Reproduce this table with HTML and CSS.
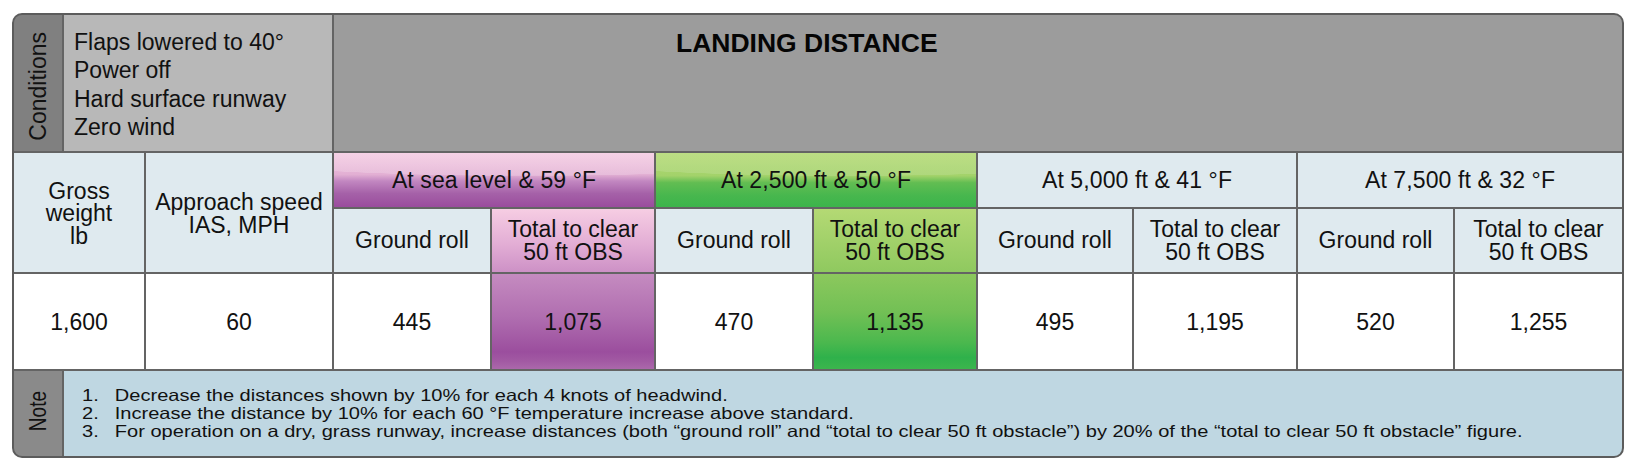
FILE: index.html
```html
<!DOCTYPE html>
<html lang="en">
<head>
<meta charset="utf-8">
<title>Landing Distance</title>
<link rel="stylesheet" href="styles.css">
</head>
<body>
<div class="chart">
  <div class="cond">
    <div class="side-label"><span class="side-text cond-label">Conditions</span></div>
    <div class="cond-text">Flaps lowered to 40°<br>Power off<br>Hard surface runway<br>Zero wind</div>
  </div>
  <div class="title"><h1>LANDING DISTANCE</h1></div>

  <div class="cell head span-rows">Gross<br>weight<br>lb</div>
  <div class="cell head span-rows">Approach speed<br>IAS, MPH</div>
  <div class="cell head group pink-group">At sea level &amp; 59 °F</div>
  <div class="cell head group green-group">At 2,500 ft &amp; 50 °F</div>
  <div class="cell head group">At 5,000 ft &amp; 41 °F</div>
  <div class="cell head group">At 7,500 ft &amp; 32 °F</div>

  <div class="cell head">Ground roll</div>
  <div class="cell head pink-sub">Total to clear<br>50 ft OBS</div>
  <div class="cell head">Ground roll</div>
  <div class="cell head green-sub">Total to clear<br>50 ft OBS</div>
  <div class="cell head">Ground roll</div>
  <div class="cell head">Total to clear<br>50 ft OBS</div>
  <div class="cell head">Ground roll</div>
  <div class="cell head">Total to clear<br>50 ft OBS</div>

  <div class="cell data">1,600</div>
  <div class="cell data">60</div>
  <div class="cell data">445</div>
  <div class="cell data pink-data">1,075</div>
  <div class="cell data">470</div>
  <div class="cell data green-data">1,135</div>
  <div class="cell data">495</div>
  <div class="cell data">1,195</div>
  <div class="cell data">520</div>
  <div class="cell data">1,255</div>

  <div class="note">
    <div class="side-label note-side"><span class="side-text note-label">Note</span></div>
    <div class="note-body">
      <ol class="notes">
        <li><span class="num">1.</span><span>Decrease the distances shown by 10% for each 4 knots of headwind.</span></li>
        <li><span class="num">2.</span><span>Increase the distance by 10% for each 60 °F temperature increase above standard.</span></li>
        <li><span class="num">3.</span><span>For operation on a dry, grass runway, increase distances (both “ground roll” and “total to clear 50 ft obstacle”) by 20% of the “total to clear 50 ft obstacle” figure.</span></li>
      </ol>
    </div>
  </div>
</div>
</body>
</html>
```

FILE: styles.css
```css
html, body {
  margin: 0;
  padding: 0;
  background: #ffffff;
}

body {
  font-family: "Liberation Sans", Arial, Helvetica, sans-serif;
  color: #111111;
  padding: 13px 0 0 12px;
}

.chart {
  display: grid;
  grid-template-columns: 130px 186px 156px 162px 156px 162px 154px 162px 155px 167px;
  grid-template-rows: 136px 54px 63px 95px 85px;
  gap: 2px;
  width: max-content;
  background: #646464;
  border: 2px solid #5c5c5c;
  border-radius: 10px;
  overflow: hidden;
}

/* top row */
.cond {
  grid-column: span 2;
  display: flex;
  gap: 2px;
}

.side-label {
  width: 48px;
  flex: none;
  background: #808080;
  display: flex;
  align-items: center;
  justify-content: center;
}

.side-text {
  writing-mode: vertical-rl;
  transform: rotate(180deg);
  white-space: nowrap;
  color: #111111;
}

.cond-label {
  font-size: 23px;
  line-height: 26px;
  margin-top: 6px;
}

.cond-text {
  flex: 1;
  background: #b8b8b8;
  font-size: 23px;
  line-height: 28.3px;
  padding: 3px 0 0 10px;
  display: flex;
  align-items: center;
}

.title {
  grid-column: span 8;
  background: #9c9c9c;
  padding: 13px 0 0 342px;
}

.title h1 {
  margin: 0;
  font-size: 26.5px;
  line-height: 30px;
  font-weight: bold;
  color: #050505;
}

/* table cells */
.cell {
  display: flex;
  align-items: center;
  justify-content: center;
  text-align: center;
  font-size: 23px;
  line-height: 22.5px;
}

.head {
  background: #dfeaef;
}

.span-rows {
  grid-row: span 2;
  padding-top: 2px;
}

.group {
  grid-column: span 2;
  font-size: 23px;
  letter-spacing: 0.1px;
}

.data {
  background: #ffffff;
  padding-top: 1px;
}

.pink-group {
  background:
    radial-gradient(ellipse 140% 60% at 60% 0%, rgba(255, 255, 255, 0.18) 0%, rgba(255, 255, 255, 0.18) 70%, rgba(255, 255, 255, 0) 71%),
    linear-gradient(180deg, #f4c8e0 0%, #e2afd3 40%, #c287c1 52%, #a561a8 75%, #9a4c9d 100%);
}

.pink-sub {
  background: linear-gradient(180deg, #f6cde3 0%, #e3aed5 55%, #cd91c6 100%);
}

.pink-data {
  background: linear-gradient(180deg, #c58bc0 0%, #b06eb0 45%, #9b4e9e 82%, #a25aa3 92%, #ab68ab 100%);
}

.green-group {
  background:
    radial-gradient(ellipse 140% 60% at 60% 0%, rgba(255, 255, 255, 0.12) 0%, rgba(255, 255, 255, 0.12) 70%, rgba(255, 255, 255, 0) 71%),
    linear-gradient(180deg, #b3d973 0%, #a3d26a 42%, #62bd52 55%, #48b74e 78%, #3cb44b 100%);
}

.green-sub {
  background: linear-gradient(180deg, #b4d974 0%, #a2d16a 50%, #8fc95f 100%);
}

.green-data {
  background: linear-gradient(180deg, #8cc85d 0%, #72c055 40%, #4bb84e 72%, #2fb14b 88%, #3cb54d 100%);
}

/* note row */
.note {
  grid-column: 1 / -1;
  display: flex;
  gap: 2px;
}

.note-side {
  background: #8a8a8a;
}

.note-label {
  font-size: 19px;
  line-height: 22px;
  transform: rotate(180deg) scaleX(1.25);
  margin-bottom: 4px;
}

.note-body {
  flex: 1;
  background: #bfd7e2;
  display: flex;
  align-items: center;
  padding-left: 18px;
}

.notes {
  list-style: none;
  margin: 0;
  padding: 0;
  font-size: 16.5px;
  line-height: 18.3px;
  transform: scaleX(1.215);
  transform-origin: left center;
  white-space: nowrap;
  margin-top: -1px;
}

.notes li {
  display: flex;
}

.notes .num {
  width: 27px;
  flex: none;
}
```
